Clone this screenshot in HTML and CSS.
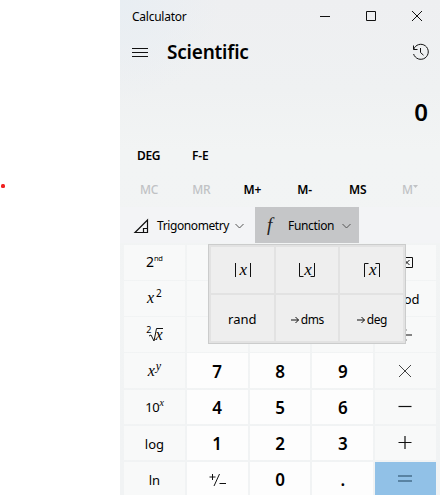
FILE: index.html
```html
<!DOCTYPE html>
<html lang="en">
<head>
<meta charset="utf-8">
<title>Calculator</title>
<link rel="stylesheet" href="styles.css">
</head>
<body>
<aside class="side"><i class="dot"></i></aside>
<main class="app">
  <header class="titlebar">
    <span class="title">Calculator</span>
    <svg class="winbtn" viewBox="0 0 46 32"><path d="M20 16.500h10"/></svg>
    <svg class="winbtn" viewBox="0 0 46 32"><path d="M20.500 11.500h9v9h-9z"/></svg>
    <svg class="winbtn" viewBox="0 0 46 32"><path d="M20 11l10 10M30 11L20 21"/></svg>
  </header>
  <div class="nav">
    <svg class="burger" viewBox="0 0 16 12"><path d="M0 1.500h16M0 5.500h16M0 9.500h16"/></svg>
    <h1>Scientific</h1>
    <svg class="history" viewBox="0 0 18 18"><path d="M1.500 2.500v4h4M1.700 6.300A7.500 7.500 0 1 1 1.600 11M8.500 5v4.500l3 2.700"/></svg>
  </div>
  <div class="display">0</div>
  <div class="modes"><span class="deg">DEG</span><span class="fe">F-E</span></div>
  <div class="memory">
    <span class="off">MC</span><span class="off">MR</span><span>M+</span><span>M-</span><span>MS</span><span class="off">M<svg class="tri" viewBox="0 0 5 3"><path d="M0 0h5L2.500 3z"/></svg></span>
  </div>
  <div class="groups">
    <div class="group trig">
      <svg class="angle" viewBox="0 0 15 15"><path d="M1 13.500L13.500 1v12.500zM9.500 13.500v-4h4"/></svg>
      <span>Trigonometry</span>
      <svg class="chev" viewBox="0 0 9 6"><path d="M.5 1l4 4 4-4"/></svg>
    </div>
    <div class="group func">
      <span class="f">f</span>
      <span>Function</span>
      <svg class="chev" viewBox="0 0 9 6"><path d="M.5 1l4 4 4-4"/></svg>
    </div>
  </div>
  <div class="keys">
    <div class="key"><span class="second">2<sup>nd</sup></span></div><div class="key"></div><div class="key"></div><div class="key"></div>
    <div class="key"><svg class="back" viewBox="0 0 16 11"><path d="M5 .5h10.500v10H5L.5 5.500zM7.500 3l5 5M12.500 3l-5 5"/></svg></div>
    <div class="key"><span class="pow"><i>x</i><sup>2</sup></span></div><div class="key"></div><div class="key"></div><div class="key"></div><div class="key mod">mod</div>
    <div class="key"><span class="root"><sup>2</sup><svg viewBox="0 0 14 14"><path d="M0 8l2-1 3 6L7.500.5H14"/></svg><i>x</i></span></div><div class="key"></div><div class="key"></div><div class="key"></div>
    <div class="key"><svg class="op" viewBox="0 0 14 14"><path d="M0 7h14M6.500 2h2M6.500 12h2"/></svg></div>
    <div class="key"><span class="pow y"><i>x</i><sup><i>y</i></sup></span></div><div class="key num">7</div><div class="key num">8</div><div class="key num">9</div>
    <div class="key"><svg class="op thin" viewBox="0 0 14 14"><path d="M1 1l12 12M13 1L1 13"/></svg></div>
    <div class="key"><span class="ten">10<sup><i>x</i></sup></span></div><div class="key num">4</div><div class="key num">5</div><div class="key num">6</div>
    <div class="key"><svg class="op" viewBox="0 0 14 14"><path d="M.5 6.500h13"/></svg></div>
    <div class="key word">log</div><div class="key num">1</div><div class="key num">2</div><div class="key num">3</div>
    <div class="key"><svg class="op" viewBox="0 0 14 14"><path d="M.5 6.500h13M7 0v13"/></svg></div>
    <div class="key word">ln</div>
    <div class="key num"><svg class="sign" viewBox="0 0 17 14"><path d="M.5 4h6M3.500 1v6M10.500 1L5 13M10.500 10.500H17"/></svg></div>
    <div class="key num">0</div><div class="key num">.</div>
    <div class="key equals"><svg class="op" viewBox="0 0 14 14"><path d="M0 4h14M0 9h14"/></svg></div>
  </div>
  <div class="popup">
    <div class="cell"><span class="bars"><svg viewBox="0 0 17 14"><path d="M.5 0v14M15.500 0v14"/></svg><i>x</i></span></div>
    <div class="cell"><span class="bars"><svg viewBox="0 0 17 14"><path d="M.5 0v13.500h4M15.500 0v13.500h-4"/></svg><i>x</i></span></div>
    <div class="cell"><span class="bars"><svg viewBox="0 0 17 14"><path d="M4.500.5h-4V14M11.500.5h4V14"/></svg><i>x</i></span></div>
    <div class="cell rand">rand</div>
    <div class="cell conv"><svg viewBox="0 0 9 8"><path d="M0 4h7.500M4.500 1l3 3-3 3"/></svg>dms</div>
    <div class="cell conv"><svg viewBox="0 0 9 8"><path d="M0 4h7.500M4.500 1l3 3-3 3"/></svg>deg</div>
  </div>
</main>
</body>
</html>
```

FILE: styles.css
```css
* { box-sizing: border-box; }
body { margin: 0; display: flex; width: 440px; height: 495px; overflow: hidden; background: #fff; color: #000; font: 12px/16px "Noto Sans", "Open Sans", sans-serif; }
svg { display: block; flex: none; fill: none; stroke: #111; stroke-width: 1; overflow: visible; }
.side { width: 120px; padding: 184px 0 0 1px; }
.dot { display: block; width: 4px; height: 4px; border-radius: 1.5px; background: #f02020; }
.app { position: relative; width: 320px; height: 495px; overflow: hidden; background: radial-gradient(circle at 0 0, #e8eef3 0, rgba(236,239,243,0) 100px), linear-gradient(#eeeff1 0, #eff1f2 90px, #f2f4f4 150px, #f1f3f4 495px); }
.titlebar { display: flex; height: 32px; padding: 0 0 0 12px; align-items: center; }
.title { flex: 1; padding-top: 1px; font-size: 12px; letter-spacing: -.25px; }
.winbtn { width: 46px; height: 32px; }
.winbtn:last-child { margin-right: 2px; }
.nav { display: flex; align-items: center; height: 40px; padding: 0 10px 0 12px; }
.burger { width: 16px; height: 12px; margin-top: 1px; }
h1 { flex: 1; margin: 0 0 0 19px; font-size: 19px; line-height: 26px; font-weight: 600; letter-spacing: -.2px; }
.history { width: 18px; height: 18px; }
.display { height: 76px; padding: 23px 12px 0 0; text-align: right; font-size: 24px; line-height: 34px; font-weight: 600; }
.modes { display: flex; height: 23px; padding-left: 17px; font-weight: 600; line-height: 16px; letter-spacing: -.4px; }
.deg { width: 55px; }
.modes .fe { letter-spacing: -.1px; }
.memory { display: grid; grid-template-columns: repeat(6, 1fr); height: 36px; padding: 11px 4px 0 3px; text-align: center; font-weight: 600; letter-spacing: -.2px; }
.memory > :nth-child(3), .memory > :nth-child(4) { margin-left: -2px; }
.off { color: #c0c2c4; font-weight: 500; }
.tri { display: inline-block; width: 5px; height: 3px; vertical-align: 6px; fill: #c0c2c4; stroke: none; }
.groups { display: flex; height: 36px; padding-left: 3px; background: #f3f4f6; }
.group { display: flex; align-items: center; height: 36px; }
.trig { width: 132px; padding: 2px 0 0 11px; }
.trig span { margin-left: 8px; width: 78px; letter-spacing: -.4px; }
.angle { width: 15px; height: 15px; stroke-width: 1.2; }
.func { width: 104px; padding: 2px 0 0 12px; background: #c5c6c8; }
.func span { width: 54px; letter-spacing: -.35px; }
.func .f { width: 21px; margin-top: -3px; font: italic 19px/22px "Liberation Serif", serif; color: #222; }
.chev { width: 9px; height: 6px; stroke: #555; }
.keys { display: grid; grid-template-columns: repeat(5, 1fr); grid-auto-rows: 34.55px; gap: 1.6px 2px; padding: 2px 4px 0; }
.key { display: flex; align-items: center; justify-content: center; background: #f8f9f9; font-size: 13px; }
.word { padding-top: 2px; }
.mod { padding-top: 2px; }
.num { padding-top: 2px; background: #fdfdfd; font-size: 17px; font-weight: 600; }
.key i, .cell i { font-family: "Liberation Serif", serif; }
sup { line-height: 0; vertical-align: 6px; font-size: 7.5px; }
.second { font-size: 14px; letter-spacing: -.2px; }
.pow i { font-size: 16px; }
.pow sup { margin-left: 2px; font-size: 10px; }
.pow.y sup { margin-left: 1px; }
.pow.y sup i { font-size: 12px; }
.ten { letter-spacing: -.3px; }
.ten sup i { font-size: 10px; }
.root { display: flex; align-items: center; }
.root sup { align-self: flex-start; margin-right: -2px; padding-top: 3px; font-size: 9px; }
.root svg { width: 14px; height: 14px; margin-right: -8px; }
.root i { font-size: 16px; }
.op { width: 14px; height: 14px; margin-right: 1px; stroke-width: 1.2; }
.thin { stroke: #444; stroke-width: 1; }
.equals { background: #91c1e7; }
.equals svg { stroke: #234660; }
.back { width: 16px; height: 11px; margin-right: 2px; }
.sign { width: 17px; height: 14px; }
.popup { position: absolute; left: 88px; top: 244px; width: 198px; height: 100px; display: grid; grid-template-columns: repeat(3, 1fr); grid-template-rows: 1fr 1fr; gap: 2px; padding: 2px; background: #e2e2e2; border: 1px solid #cbcccc; }
.cell { display: flex; align-items: center; justify-content: center; background: #eee; font-size: 13px; }
.rand { padding-top: 2px; }
.bars { display: grid; place-items: center; margin-left: 2px; }
.bars > * { grid-area: 1 / 1; }
.bars svg { width: 17px; height: 14px; }
.bars i { font-size: 17px; line-height: 14px; }
.conv { padding: 3px 0 0 1px; font-size: 12px; letter-spacing: -.45px; }
.conv svg { width: 9px; height: 8px; margin-right: .5px; }
```
